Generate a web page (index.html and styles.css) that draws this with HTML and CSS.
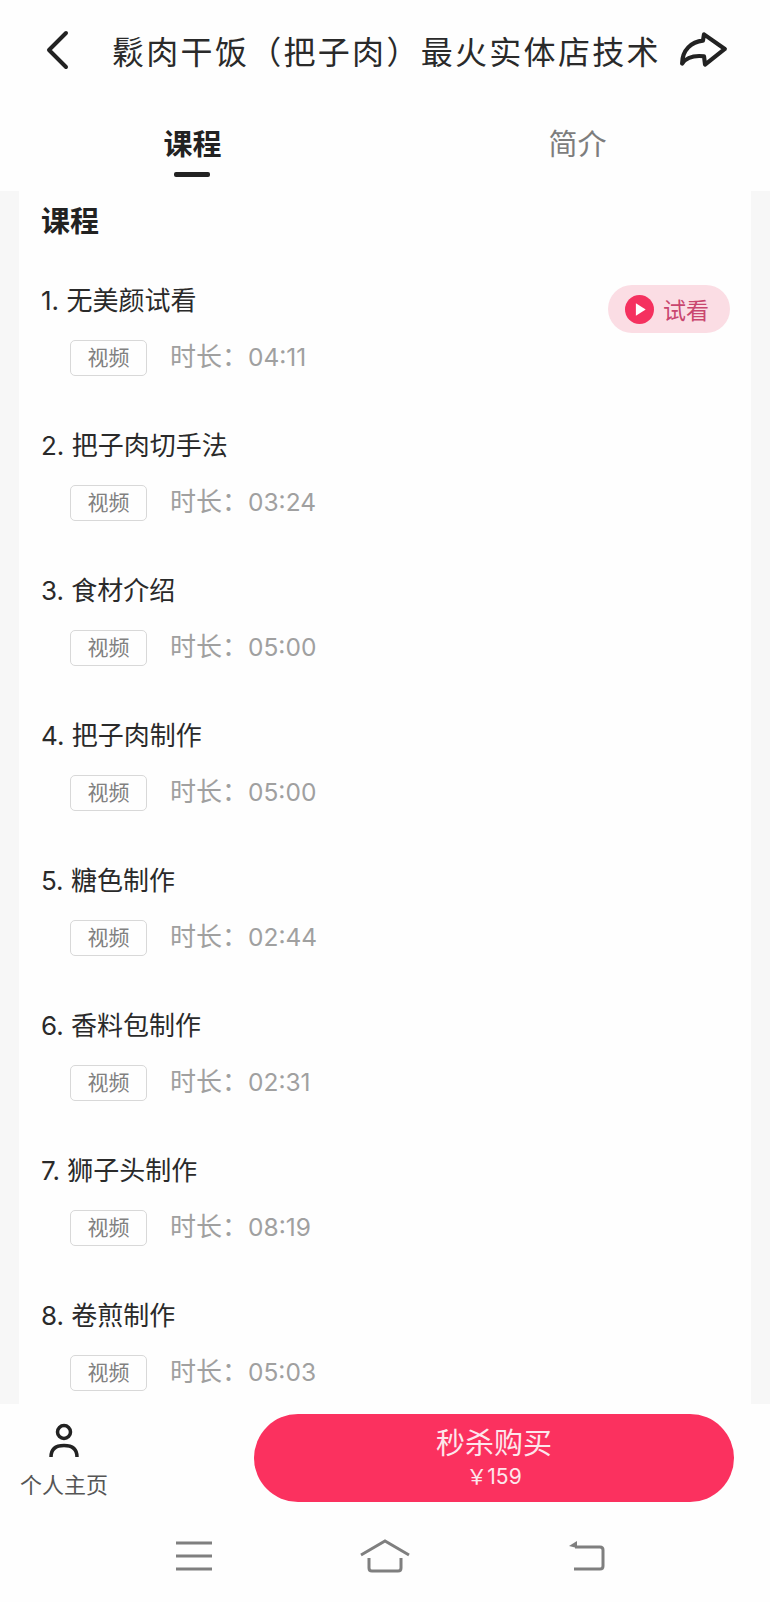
FILE: index.html
```html
<!DOCTYPE html>
<html>
  <head>
    <title>课程</title>
    <meta name="viewport" content="width=device-width,initial-scale=1">
    <link rel="stylesheet" href="styles.css">
  </head>
  <body>
    <header class="topbar">
      <svg class="icon-back" viewBox="0 0 26 40"><path d="M22 3 L5 20 L22 37" /></svg>
      <div class="topbar-title">鬏肉干饭（把子肉）最火实体店技术</div>
      <svg class="icon-share" viewBox="0 0 48 36"><path d="M24 3 L44 17 L25 32 L24 24 C15 23 7 25 3 31 C3 18 12 10 23 9 Z" /></svg>
    </header>
    <nav class="tabs">
      <div class="tab tab-active">课程</div>
      <div class="tab">简介</div>
    </nav>
    <main class="content">
      <section class="card">
        <h2 class="card-title">课程</h2>
        <div class="lesson">
          <div class="lesson-main">
            <div class="lesson-name">1. 无美颜试看</div>
            <div class="lesson-meta"><span class="tag">视频</span><span class="duration">时长：<span class="time">04:11</span></span></div>
          </div>
          <div class="trial">
            <svg class="icon-play" viewBox="0 0 28 28"><circle cx="14" cy="14" r="14" /><path d="M10.5 8 L20 14 L10.5 20 Z" /></svg>
            <span>试看</span>
          </div>
        </div>
        <div class="lesson">
          <div class="lesson-main">
            <div class="lesson-name">2. 把子肉切手法</div>
            <div class="lesson-meta"><span class="tag">视频</span><span class="duration">时长：<span class="time">03:24</span></span></div>
          </div>
        </div>
        <div class="lesson">
          <div class="lesson-main">
            <div class="lesson-name">3. 食材介绍</div>
            <div class="lesson-meta"><span class="tag">视频</span><span class="duration">时长：<span class="time">05:00</span></span></div>
          </div>
        </div>
        <div class="lesson">
          <div class="lesson-main">
            <div class="lesson-name">4. 把子肉制作</div>
            <div class="lesson-meta"><span class="tag">视频</span><span class="duration">时长：<span class="time">05:00</span></span></div>
          </div>
        </div>
        <div class="lesson">
          <div class="lesson-main">
            <div class="lesson-name">5. 糖色制作</div>
            <div class="lesson-meta"><span class="tag">视频</span><span class="duration">时长：<span class="time">02:44</span></span></div>
          </div>
        </div>
        <div class="lesson">
          <div class="lesson-main">
            <div class="lesson-name">6. 香料包制作</div>
            <div class="lesson-meta"><span class="tag">视频</span><span class="duration">时长：<span class="time">02:31</span></span></div>
          </div>
        </div>
        <div class="lesson">
          <div class="lesson-main">
            <div class="lesson-name">7. 狮子头制作</div>
            <div class="lesson-meta"><span class="tag">视频</span><span class="duration">时长：<span class="time">08:19</span></span></div>
          </div>
        </div>
        <div class="lesson">
          <div class="lesson-main">
            <div class="lesson-name">8. 卷煎制作</div>
            <div class="lesson-meta"><span class="tag">视频</span><span class="duration">时长：<span class="time">05:03</span></span></div>
          </div>
        </div>
      </section>
    </main>
    <footer class="buybar">
      <div class="profile">
        <svg class="icon-person" viewBox="0 0 34 36"><circle cx="17" cy="10" r="6.5" /><path d="M4 35 C4 27 9 23.5 17 23.5 C25 23.5 30 27 30 35" /></svg>
        <span>个人主页</span>
      </div>
      <div class="buy">
        <span class="buy-label">秒杀购买</span>
        <span class="buy-price">￥159</span>
      </div>
    </footer>
    <div class="navbar">
      <svg class="nav-icon" viewBox="0 0 38 30"><path d="M1 2 H37 M1 15 H37 M1 28 H37" /></svg>
      <svg class="nav-icon nav-home" viewBox="0 0 52 36"><path d="M2 17 L26 3 L50 17 M10 20 V30 Q10 33 13 33 H39 Q42 33 42 30 V20" /></svg>
      <svg class="nav-icon" viewBox="0 0 38 30"><path d="M8 6 H33 Q36 6 36 9 V25 Q36 28 33 28 H7" /><path class="nav-fill" d="M2 5 L10 0 V7 Z" /></svg>
    </div>
  </body>
</html>
```

FILE: styles.css
```css
html, body {
  margin: 0;
  height: 1602px;
  overflow: hidden;
}
body {
  display: flex;
  flex-direction: column;
  background-color: #fefefe;
  font-family: Inter, "Noto Sans CJK SC", sans-serif;
  color: #222;
}
.topbar {
  display: flex;
  align-items: center;
  height: 102px;
  flex: 0 0 auto;
  padding: 0 41px 3px 44px;
  box-sizing: border-box;
}
.icon-back {
  width: 26px;
  height: 40px;
  flex: 0 0 auto;
  fill: none;
  stroke: #222;
  stroke-width: 4;
  stroke-linecap: round;
  stroke-linejoin: round;
}
.topbar-title {
  flex-grow: 1;
  margin-left: 42px;
  font-size: 32px;
  letter-spacing: 2.3px;
  white-space: nowrap;
  color: #2a2a2a;
}
.icon-share {
  width: 50px;
  height: 38px;
  flex: 0 0 auto;
  fill: none;
  stroke: #222;
  stroke-width: 4;
  stroke-linejoin: round;
}
.tabs {
  display: flex;
  height: 89px;
  flex: 0 0 auto;
}
.tab {
  position: relative;
  width: 385px;
  padding-top: 25px;
  font-size: 29px;
  line-height: 36px;
  text-align: center;
  color: #7d7d7d;
}
.tab-active {
  font-weight: 700;
  color: #222;
}
.tab-active::after {
  content: "";
  position: absolute;
  left: 174px;
  top: 70px;
  width: 36px;
  height: 5px;
  background-color: #222;
  border-radius: 2px;
}
.content {
  flex: 1 1 auto;
  min-height: 0;
  overflow: hidden;
  padding: 0 19px;
  background-color: #f7f7f7;
}
.card {
  height: 100%;
  padding: 0 22px;
  background-color: #fefefe;
}
.card-title {
  margin: 0 0 9px;
  padding-top: 11px;
  font-size: 29px;
  line-height: 40px;
  font-weight: 700;
  color: #222;
}
.lesson {
  display: flex;
  justify-content: space-between;
  align-items: flex-start;
  height: 145px;
}
.lesson-name {
  padding-top: 32px;
  font-size: 26px;
  line-height: 36px;
  color: #2a2a2a;
}
.lesson-meta {
  display: flex;
  align-items: center;
  margin-top: 21px;
  padding-left: 29px;
}
.tag {
  width: 75px;
  height: 34px;
  border: 1px solid #d8d8d8;
  border-radius: 5px;
  font-size: 21px;
  line-height: 34px;
  text-align: center;
  color: #808080;
}
.duration {
  margin: -7px 0 0 23px;
  font-size: 26px;
  color: #a0a0a0;
}
.time {
  font-size: 24.5px;
}
.trial {
  display: flex;
  align-items: center;
  gap: 9px;
  width: 122px;
  height: 48px;
  margin: 34px -1px 0 0;
  padding-left: 17px;
  box-sizing: border-box;
  border-radius: 24px;
  background-color: #fbdde4;
  font-size: 23px;
  color: #c9466f;
}
.icon-play {
  width: 29px;
  height: 29px;
}
.icon-play circle {
  fill: #f5315f;
}
.icon-play path {
  fill: #fff;
}
.buybar {
  display: flex;
  align-items: center;
  height: 108px;
  flex: 0 0 auto;
  padding: 0 36px 0 20px;
  box-sizing: border-box;
}
.profile {
  display: flex;
  flex-direction: column;
  align-items: center;
  width: 88px;
  padding-top: 5px;
  font-size: 22px;
  color: #555;
}
.icon-person {
  width: 34px;
  height: 36px;
  margin-bottom: 9px;
  fill: none;
  stroke: #222;
  stroke-width: 3.5;
}
.buy {
  display: flex;
  flex-direction: column;
  align-items: center;
  justify-content: center;
  width: 480px;
  height: 88px;
  margin-left: auto;
  border-radius: 44px;
  background-color: #fb315f;
  color: #fde6ec;
}
.buy-label {
  font-size: 29px;
  line-height: 38px;
}
.buy-price {
  font-size: 21px;
  line-height: 28px;
}
.navbar {
  display: flex;
  align-items: center;
  justify-content: space-between;
  height: 90px;
  flex: 0 0 auto;
  padding: 0 165px 2px 175px;
  box-sizing: border-box;
}
.nav-icon {
  width: 38px;
  height: 30px;
  fill: none;
  stroke: #7f7f7f;
  stroke-width: 3;
}
.nav-home {
  width: 52px;
  height: 36px;
  margin-right: 10px;
}
.nav-fill {
  fill: #7f7f7f;
  stroke: none;
}
```
